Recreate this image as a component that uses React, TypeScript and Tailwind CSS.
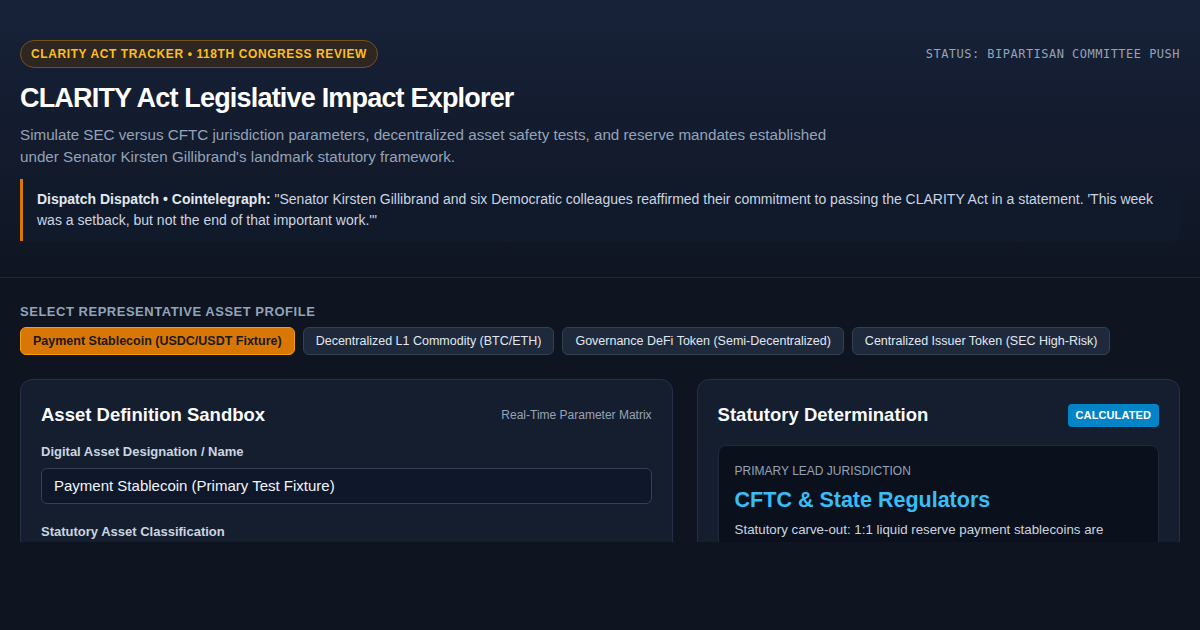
import React from "react";

const profiles = [
  "Payment Stablecoin (USDC/USDT Fixture)",
  "Decentralized L1 Commodity (BTC/ETH)",
  "Governance DeFi Token (Semi-Decentralized)",
  "Centralized Issuer Token (SEC High-Risk)",
];

export default function App() {
  return (
    <div
      className="min-h-[630px] w-full bg-[#0e1420] text-white"
      style={{ fontFamily: '"Liberation Sans", Arial, sans-serif' }}
    >
      <div className="h-[542px] overflow-hidden">
        {/* Hero header */}
        <header className="border-b border-[#1e293b] bg-gradient-to-b from-[#172239] to-[#0f1522] px-5 pt-10 pb-9">
          <div className="flex items-center justify-between">
            <span className="rounded-full border border-[#78501c] bg-[#2e2620] px-[10px] py-[6px] text-[12px] leading-[14px] font-bold uppercase tracking-[0.05em] text-[#fbbf24]">
              CLARITY Act Tracker • 118th Congress Review
            </span>
            <span
              className="text-[12px] uppercase tracking-[0.04em] text-[#94a3b8]"
              style={{ fontFamily: '"DejaVu Sans Mono", "Liberation Mono", monospace' }}
            >
              Status: Bipartisan Committee Push
            </span>
          </div>
          <h1 className="mt-[13px] text-[27px] leading-[34px] font-bold tracking-[-0.03em] text-white">
            CLARITY Act Legislative Impact Explorer
          </h1>
          <p className="mt-[9px] max-w-[840px] text-[15.2px] leading-[22px] text-[#94a3b8]">
            Simulate SEC versus CFTC jurisdiction parameters, decentralized asset safety tests, and reserve mandates
            established under Senator Kirsten Gillibrand's landmark statutory framework.
          </p>
          <div className="mt-[11px] rounded-r-md border-l-[3px] border-[#d97706] bg-[#111a2b] py-[10px] pr-4 pl-[14px] text-[14px] leading-[21px] text-[#cbd5e1]">
            <strong className="font-bold text-[#e2e8f0]">Dispatch Dispatch • Cointelegraph:</strong> "Senator Kirsten
            Gillibrand and six Democratic colleagues reaffirmed their commitment to passing the CLARITY Act in a
            statement. 'This week was a setback, but not the end of that important work.'"
          </div>
        </header>

        <main className="px-5 pt-[26px]">
          <h2 className="text-[13px] leading-[16px] font-bold uppercase tracking-[0.04em] text-[#94a3b8]">
            Select Representative Asset Profile
          </h2>
          <div className="mt-[7px] flex flex-wrap gap-2">
            {profiles.map((p, i) => (
              <button
                key={p}
                className={
                  i === 0
                    ? "h-[28px] rounded-md border border-[#f59e0b] bg-[#d97706] px-3 text-[12.5px] font-bold text-[#1c1917]"
                    : "h-[28px] rounded-md border border-[#334155] bg-[#1e293b] px-3 text-[12.5px] text-[#e2e8f0]"
                }
              >
                {p}
              </button>
            ))}
          </div>

          <div className="mt-6 grid grid-cols-[1.35fr_1fr] gap-6">
            {/* Left: input sandbox */}
            <section className="rounded-xl border border-[#243045] bg-[#151e2f] p-5">
              <div className="flex items-center justify-between">
                <h3 className="text-[18.5px] leading-[30px] font-bold text-[#f8fafc]">Asset Definition Sandbox</h3>
                <span className="text-[12px] text-[#94a3b8]">Real-Time Parameter Matrix</span>
              </div>
              <label className="mt-[14px] block text-[13px] leading-[16px] font-bold text-[#cbd5e1]">
                Digital Asset Designation / Name
              </label>
              <div className="mt-[8px] flex h-[36px] items-center rounded-md border border-[#334155] bg-[#0f172a] px-3 text-[15px] text-[#f1f5f9]">
                Payment Stablecoin (Primary Test Fixture)
              </div>
              <label className="mt-[20px] block text-[13px] leading-[16px] font-bold text-[#cbd5e1]">
                Statutory Asset Classification
              </label>
            </section>

            {/* Right: computed result */}
            <section className="rounded-xl border border-[#243045] bg-[#151e2f] p-5">
              <div className="flex items-center justify-between">
                <h3 className="text-[18.5px] leading-[30px] font-bold text-[#f8fafc]">Statutory Determination</h3>
                <span className="flex h-[23px] items-center rounded bg-[#0284c7] px-[8px] text-[11px] font-bold tracking-[0.01em] text-white">
                  CALCULATED
                </span>
              </div>
              <div className="mt-[15px] rounded-lg border border-[#1e293b] bg-[#0b111c] pt-[18px] pr-4 pb-4 pl-[16px]">
                <div className="text-[12px] leading-[15px] uppercase text-[#94a3b8]">Primary Lead Jurisdiction</div>
                <div className="mt-[7px] text-[21.5px] leading-[28px] font-bold text-[#38bdf8]">
                  CFTC &amp; State Regulators
                </div>
                <p className="mt-[6px] text-[13.3px] leading-[20px] text-[#cbd5e1]">
                  Statutory carve-out: 1:1 liquid reserve payment stablecoins are regulated under state and federal
                  banking oversight.
                </p>
              </div>
            </section>
          </div>
        </main>
      </div>
    </div>
  );
}
